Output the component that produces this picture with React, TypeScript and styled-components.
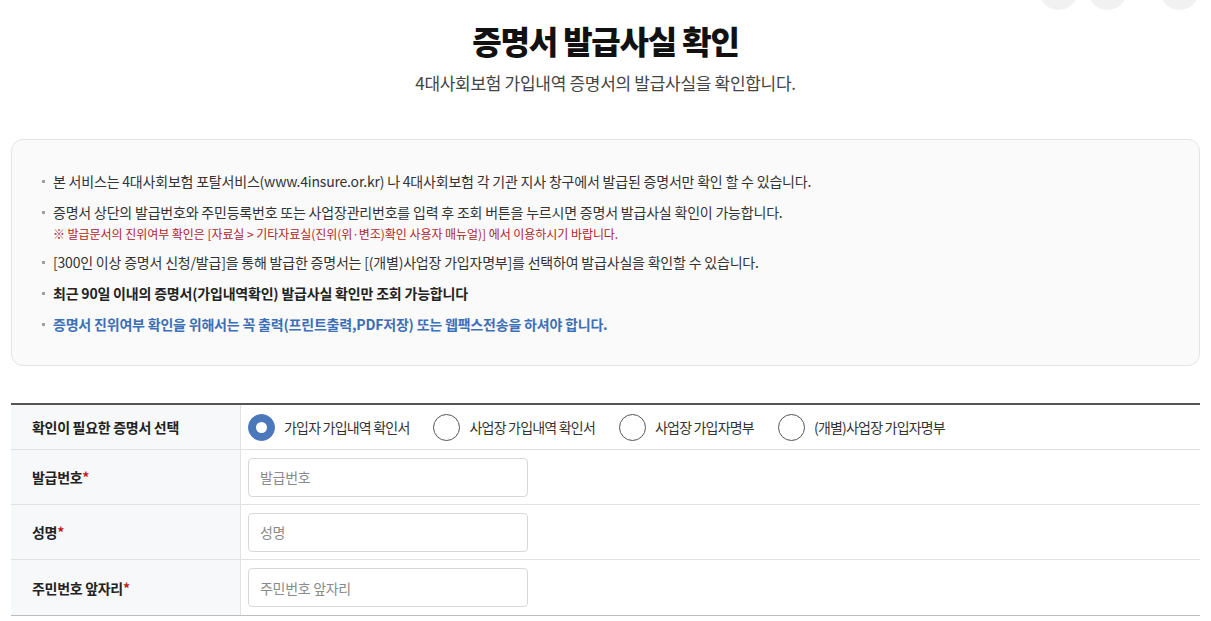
import React from "react";
import styled, { createGlobalStyle } from "styled-components";

const GlobalStyle = createGlobalStyle`
  html, body { margin: 0; padding: 0; background: #fff; }
  body { font-family: "Noto Sans CJK KR", "Noto Sans", sans-serif; color: #333; }
  * { box-sizing: border-box; }
`;

const Page = styled.div`
  width: 1211px;
  padding: 0 11px;
`;

const UtilBar = styled.div`
  display: flex;
  justify-content: flex-end;
  align-items: flex-end;
  height: 10px;
  overflow: hidden;
  padding-right: 1px;
`;

const UtilCircle = styled.span<{ $gap: number }>`
  flex: none;
  width: 39px;
  height: 39px;
  border-radius: 50%;
  background: #f1f1f1;
  margin-left: ${(p) => p.$gap}px;
`;

const Title = styled.h1`
  margin: 10px 0 0;
  text-align: center;
  font-size: 32px;
  line-height: 40px;
  font-weight: 800;
  color: #111;
  letter-spacing: -1.2px;
`;

const SubTitle = styled.p`
  margin: 11px 0 0;
  text-align: center;
  font-size: 17px;
  line-height: 24px;
  color: #444;
  letter-spacing: -0.3px;
`;

const InfoBox = styled.div`
  margin-top: 44px;
  background: #fafafa;
  border: 1px solid #e4e4e4;
  border-radius: 12px;
  padding: 31px 30px 31px 30px;
`;

const InfoList = styled.ul`
  list-style: none;
  margin: 0;
  padding: 0;
  display: flex;
  flex-direction: column;
  gap: 11px;
`;

const InfoItem = styled.li<{ $tone?: "bold" | "blue" }>`
  display: flex;
  align-items: flex-start;
  font-size: 14px;
  line-height: 20px;
  letter-spacing: ${(p) => (p.$tone === "bold" ? "-0.2px" : "-0.2px")};
  color: ${(p) => (p.$tone === "blue" ? "#3d6fb6" : p.$tone === "bold" ? "#222" : "#333")};
  font-weight: ${(p) => (p.$tone ? 700 : 400)};
`;

const Bullet = styled.span`
  flex: none;
  width: 3px;
  height: 3px;
  background: #a0a0a0;
  margin: 9px 8px 0 0;
`;

const ItemBody = styled.div`
  display: flex;
  flex-direction: column;
`;

const Warning = styled.span`
  margin-top: 4px;
  font-size: 12px;
  line-height: 15px;
  color: #b0232b;
  letter-spacing: -0.05px;
`;

const FormTable = styled.div`
  margin-top: 37px;
  border-top: 2px solid #555;
  border-bottom: 1px solid #bdbdbd;
`;

const Row = styled.div<{ $h: number; $last?: boolean }>`
  display: grid;
  grid-template-columns: 230px 1fr;
  height: ${(p) => p.$h}px;
  border-bottom: ${(p) => (p.$last ? "none" : "1px solid #e2e2e2")};
`;

const HeadCell = styled.div`
  display: flex;
  align-items: center;
  padding-left: 21px;
  background: #f7f8fa;
  border-right: 1px solid #e2e2e2;
  font-size: 14px;
  font-weight: 700;
  color: #222;
  letter-spacing: -0.3px;
`;

const Required = styled.span`
  color: #c4161c;
  letter-spacing: 0;
`;

const DataCell = styled.div`
  display: flex;
  align-items: center;
  padding-left: 7px;
`;

const RadioGroup = styled.div`
  display: flex;
  align-items: center;
  gap: 24px;
`;

const RadioLabel = styled.label`
  display: flex;
  align-items: center;
  gap: 9px;
  font-size: 14px;
  color: #333;
  letter-spacing: -0.8px;
  cursor: pointer;
`;

const RadioMark = styled.span<{ $on?: boolean }>`
  flex: none;
  width: 27px;
  height: 27px;
  border-radius: 50%;
  display: flex;
  align-items: center;
  justify-content: center;
  background: ${(p) => (p.$on ? "#4a78ba" : "#fff")};
  border: 1px solid ${(p) => (p.$on ? "#4a78ba" : "#555")};
  &::after {
    content: "";
    width: 11px;
    height: 11px;
    border-radius: 50%;
    background: #fff;
    display: ${(p) => (p.$on ? "block" : "none")};
  }
`;

const TextInput = styled.input`
  width: 280px;
  height: 39px;
  border: 1px solid #d8d8d8;
  border-radius: 4px;
  padding: 0 11px;
  font-family: inherit;
  font-size: 14px;
  letter-spacing: -0.3px;
  color: #333;
  outline: none;
  &::placeholder { color: #8a8a8a; }
`;

const options = [
  "가입자 가입내역 확인서",
  "사업장 가입내역 확인서",
  "사업장 가입자명부",
  "(개별)사업장 가입자명부",
];

const fields = [
  { label: "발급번호", ph: "발급번호" },
  { label: "성명", ph: "성명" },
  { label: "주민번호 앞자리", ph: "주민번호 앞자리" },
];

export default function App() {
  return (
    <>
      <GlobalStyle />
      <Page>
        <UtilBar>
          <UtilCircle $gap={0} />
          <UtilCircle $gap={10} />
          <UtilCircle $gap={33} />
        </UtilBar>
        <Title>증명서 발급사실 확인</Title>
        <SubTitle>4대사회보험 가입내역 증명서의 발급사실을 확인합니다.</SubTitle>

        <InfoBox>
          <InfoList>
            <InfoItem>
              <Bullet />
              <ItemBody>
                본 서비스는 4대사회보험 포탈서비스(www.4insure.or.kr) 나 4대사회보험 각 기관 지사 창구에서 발급된 증명서만 확인 할 수 있습니다.
              </ItemBody>
            </InfoItem>
            <InfoItem>
              <Bullet />
              <ItemBody>
                <span>증명서 상단의 발급번호와 주민등록번호 또는 사업장관리번호를 입력 후 조회 버튼을 누르시면 증명서 발급사실 확인이 가능합니다.</span>
                <Warning>※ 발급문서의 진위여부 확인은 [자료실 &gt; 기타자료실(진위(위·변조)확인 사용자 매뉴얼)] 에서 이용하시기 바랍니다.</Warning>
              </ItemBody>
            </InfoItem>
            <InfoItem>
              <Bullet />
              <ItemBody>
                [300인 이상 증명서 신청/발급]을 통해 발급한 증명서는 [(개별)사업장 가입자명부]를 선택하여 발급사실을 확인할 수 있습니다.
              </ItemBody>
            </InfoItem>
            <InfoItem $tone="bold">
              <Bullet />
              <ItemBody>최근 90일 이내의 증명서(가입내역확인) 발급사실 확인만 조회 가능합니다</ItemBody>
            </InfoItem>
            <InfoItem $tone="blue">
              <Bullet />
              <ItemBody>증명서 진위여부 확인을 위해서는 꼭 출력(프린트출력,PDF저장) 또는 웹팩스전송을 하셔야 합니다.</ItemBody>
            </InfoItem>
          </InfoList>
        </InfoBox>

        <FormTable>
          <Row $h={45}>
            <HeadCell>확인이 필요한 증명서 선택</HeadCell>
            <DataCell>
              <RadioGroup>
                {options.map((o, i) => (
                  <RadioLabel key={o}>
                    <RadioMark $on={i === 0} />
                    {o}
                  </RadioLabel>
                ))}
              </RadioGroup>
            </DataCell>
          </Row>
          {fields.map((f, i) => (
            <Row key={f.label} $h={55} $last={i === fields.length - 1}>
              <HeadCell>
                {f.label}
                <Required>*</Required>
              </HeadCell>
              <DataCell>
                <TextInput placeholder={f.ph} />
              </DataCell>
            </Row>
          ))}
        </FormTable>
      </Page>
    </>
  );
}
